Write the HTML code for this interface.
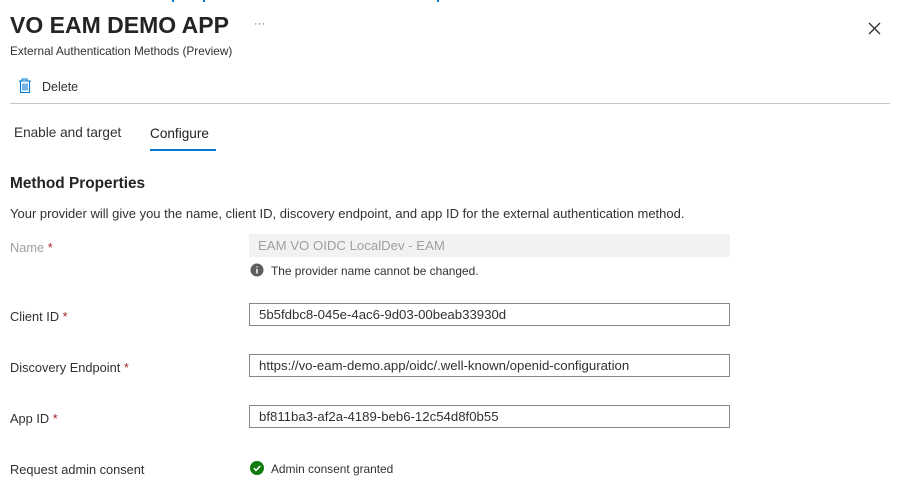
<!DOCTYPE html><html><head><style>
body{margin:0;width:899px;height:500px;background:#fff;font-family:"Liberation Sans",sans-serif;color:#323130;position:relative;overflow:hidden}
.a{position:absolute;white-space:nowrap}
.in{position:absolute;left:249px;width:481px;height:23px;border:1px solid #8a8886;box-sizing:border-box;font-size:13.2px;line-height:21px;padding-left:9px;color:#323130}
.lb{position:absolute;left:10px;font-size:12.8px}
.r{color:#a4262c}
</style></head><body>
<div class="a" style="left:172px;top:0;width:2px;height:2px;background:#0078d4"></div>
<div class="a" style="left:203px;top:0;width:2px;height:2px;background:#0078d4"></div>
<div class="a" style="left:437px;top:0;width:2px;height:2px;background:#0078d4"></div>
<div class="a" style="left:10px;top:12px;font-size:23px;font-weight:bold;color:#252423">VO EAM DEMO APP</div>
<div class="a" style="left:254px;top:18px;font-size:11px;color:#605e5c">···</div>
<svg class="a" style="left:868px;top:22px" width="13" height="13"><path d="M1 1L12 12M12 1L1 12" stroke="#323130" stroke-width="1.3"/></svg>
<div class="a" style="left:10px;top:44px;font-size:11.8px;color:#323130">External Authentication Methods (Preview)</div>
<svg class="a" style="left:18px;top:78px" width="14" height="16"><path d="M4 2.5V1h5v1.5M1 3h12M2.5 3v11.5h9V3M5 5.5v7M7 5.5v7M9 5.5v7" stroke="#0078d4" fill="none" stroke-width="1.1"/></svg>
<div class="a" style="left:42px;top:80px;font-size:12.5px">Delete</div>
<div class="a" style="left:10px;top:103px;width:880px;height:1px;background:#c8c6c4"></div>
<div class="a" style="left:14px;top:125px;font-size:13.6px">Enable and target</div>
<div class="a" style="left:150px;top:126px;font-size:13.6px;color:#252423">Configure</div>
<div class="a" style="left:150px;top:149px;width:66px;height:2px;background:#0078d4"></div>
<div class="a" style="left:10px;top:175px;font-size:15.4px;font-weight:bold;color:#252423">Method Properties</div>
<div class="a" style="left:10px;top:206px;font-size:13px">Your provider will give you the name, client ID, discovery endpoint, and app ID for the external authentication method.</div>
<div class="lb" style="top:240px;color:#a19f9d">Name <span class="r">*</span></div>
<div class="in" style="top:234px;height:23px;border:none;background:#f3f2f1;color:#a19f9d;line-height:23px">EAM VO OIDC LocalDev - EAM</div>
<svg class="a" style="left:250px;top:263px" width="14" height="14"><circle cx="7" cy="7" r="6.5" fill="#605e5c"/><path d="M7 6v4.5M7 3.5v1" stroke="#fff" stroke-width="1.5"/></svg>
<div class="a" style="left:271px;top:264px;font-size:11.9px">The provider name cannot be changed.</div>
<div class="lb" style="top:309px">Client ID <span class="r">*</span></div>
<div class="in" style="top:303px">5b5fdbc8-045e-4ac6-9d03-00beab33930d</div>
<div class="lb" style="top:360px">Discovery Endpoint <span class="r">*</span></div>
<div class="in" style="top:354px">https://vo-eam-demo.app/oidc/.well-known/openid-configuration</div>
<div class="lb" style="top:411px">App ID <span class="r">*</span></div>
<div class="in" style="top:405px">bf811ba3-af2a-4189-beb6-12c54d8f0b55</div>
<div class="lb" style="top:462px">Request admin consent</div>
<svg class="a" style="left:250px;top:461px" width="14" height="14"><circle cx="7" cy="7" r="7" fill="#107c10"/><path d="M3.8 7.2l2.2 2.2 4.2-4.4" stroke="#fff" stroke-width="1.5" fill="none"/></svg>
<div class="a" style="left:271px;top:462px;font-size:11.9px">Admin consent granted</div>
</body></html>
